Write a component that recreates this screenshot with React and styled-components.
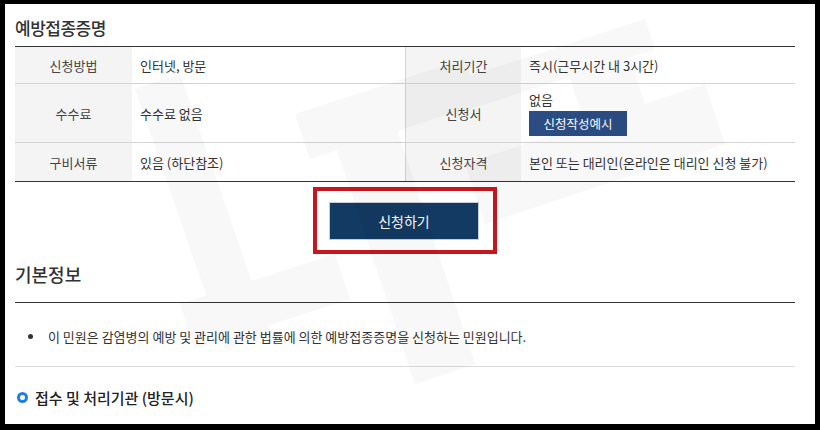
import React from 'react';
import styled, { createGlobalStyle } from 'styled-components';

const GlobalStyle = createGlobalStyle`
  html, body {
    margin: 0;
    padding: 0;
    background: #000;
  }
  body {
    font-family: "Noto Sans CJK KR", "Noto Sans", sans-serif;
    color: #333;
  }
`;

const Frame = styled.div`
  width: 820px;
  height: 430px;
  box-sizing: border-box;
  padding: 4px 5px 6px 5px;
  background: #000;
`;

const Sheet = styled.div`
  position: relative;
  height: 100%;
  background: #fff;
  padding: 0 20px 0 10px;
  overflow: hidden;
`;

const Watermark = styled.svg`
  position: absolute;
  left: 0;
  top: 0;
  pointer-events: none;
`;

const Title = styled.h2`
  margin: 0;
  padding-top: 11px;
  height: 31px;
  font-size: 17px;
  font-weight: 500;
  color: #333;
  letter-spacing: -0.5px;
`;

const InfoTable = styled.div`
  display: grid;
  grid-template-columns: 117px 273px 116px 274px;
  grid-template-rows: 37px 59px 38px;
  border-top: 1px solid #333;
  border-bottom: 1px solid #333;
  font-size: 13px;
`;

const HeadCell = styled.div`
  display: flex;
  align-items: center;
  justify-content: center;
  background: #f4f4f4;
  color: #444;
  border-bottom: ${p => (p.$last ? 'none' : '1px solid #d4d4d4')};
  border-left: ${p => (p.$divider ? '1px solid #d4d4d4' : 'none')};
`;

const ValueCell = styled.div`
  display: flex;
  flex-direction: column;
  justify-content: center;
  align-items: flex-start;
  gap: 2px;
  padding-left: 8px;
  color: #333;
  background: rgba(255, 255, 255, 0.6);
  border-bottom: ${p => (p.$last ? 'none' : '1px solid #d4d4d4')};
`;

const SmallButton = styled.button`
  width: 98px;
  height: 25px;
  border: none;
  background: #2c4d84;
  color: #fff;
  font-family: inherit;
  font-size: 12.5px;
  padding: 0;
  cursor: pointer;
`;

const ApplyRow = styled.div`
  display: flex;
  justify-content: center;
  padding-top: 5px;
`;

const Highlight = styled.div`
  border: 4px solid #c8161e;
  padding: 11px 14px 10px 12px;
  background: #fff;
`;

const ApplyButton = styled.button`
  width: 150px;
  height: 38px;
  background: #133a63;
  border: 1px solid #c9ced6;
  color: #fff;
  font-family: inherit;
  font-size: 14px;
  padding: 0;
  display: block;
  cursor: pointer;
`;

const SectionTitle = styled.h3`
  margin: 0;
  padding-top: 7px;
  height: 41px;
  font-size: 18px;
  font-weight: 500;
  color: #333;
  border-bottom: 1px solid #333;
  display: flex;
  align-items: flex-start;
  line-height: 26px;
`;

const BulletList = styled.ul`
  margin: 0;
  padding: 3px 0 0 13px;
  list-style: none;
  border-bottom: 1px solid #dcdcdc;
  height: 60px;
  display: flex;
  align-items: center;
`;

const BulletItem = styled.li`
  font-size: 13px;
  color: #333;
  display: flex;
  align-items: center;
  gap: 15px;

  &::before {
    content: '';
    width: 5px;
    height: 5px;
    border-radius: 50%;
    background: #333;
  }
`;

const SubTitle = styled.h4`
  margin: 0;
  padding: 3px 0 0 2px;
  height: 54px;
  display: flex;
  align-items: center;
  gap: 7px;
  font-size: 15px;
  font-weight: 500;
  color: #222;
`;

const Ring = styled.span`
  width: 5px;
  height: 5px;
  border: 3px solid #1f80dc;
  border-radius: 50%;
`;

const rows = [
  ['신청방법', '인터넷, 방문', '처리기간', '즉시(근무시간 내 3시간)'],
  ['수수료', '수수료 없음', '신청서', null],
  ['구비서류', '있음 (하단참조)', '신청자격', '본인 또는 대리인(온라인은 대리인 신청 불가)'],
];

export default function App() {
  return (
    <Frame>
      <GlobalStyle />
      <Sheet>
        <Title>예방접종증명</Title>
        <InfoTable>
          {rows.map((r, i) => {
            const last = i === rows.length - 1;
            return (
              <React.Fragment key={r[0]}>
                <HeadCell $last={last}>{r[0]}</HeadCell>
                <ValueCell $last={last}>{r[1]}</ValueCell>
                <HeadCell $last={last} $divider>{r[2]}</HeadCell>
                <ValueCell $last={last}>
                  {r[3] ?? (
                    <>
                      <span>없음</span>
                      <SmallButton>신청작성예시</SmallButton>
                    </>
                  )}
                </ValueCell>
              </React.Fragment>
            );
          })}
        </InfoTable>
        <ApplyRow>
          <Highlight>
            <ApplyButton>신청하기</ApplyButton>
          </Highlight>
        </ApplyRow>
        <SectionTitle>기본정보</SectionTitle>
        <BulletList>
          <BulletItem>이 민원은 감염병의 예방 및 관리에 관한 법률에 의한 예방접종증명을 신청하는 민원입니다.</BulletItem>
        </BulletList>
        <SubTitle>
          <Ring />
          접수 및 처리기관 (방문시)
        </SubTitle>
        <Watermark width="810" height="420" viewBox="0 0 810 420">
          <g fill="#000" opacity="0.022">
            <polygon points="130,85 175,70 265,330 220,345" />
            <polygon points="175,300 330,250 345,295 190,345" />
            <polygon points="330,140 390,120 470,360 410,380" />
            <polygon points="290,110 460,55 475,100 305,155" />
            <polygon points="440,80 640,15 650,45 450,110" />
            <polygon points="460,160 700,80 720,140 480,220" />
            <polygon points="560,60 620,40 660,160 600,180" />
          </g>
        </Watermark>
      </Sheet>
    </Frame>
  );
}
